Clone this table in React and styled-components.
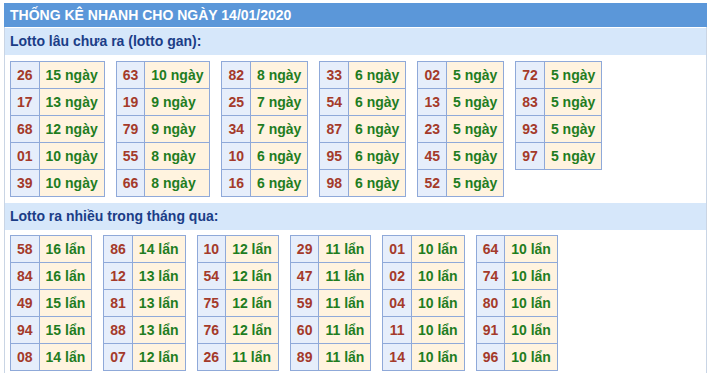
import React from "react";
import styled, { createGlobalStyle } from "styled-components";

const Global = createGlobalStyle`
  html, body { margin: 0; padding: 0; background: #fff; }
  body { font-family: "Liberation Sans", Arial, sans-serif; }
`;

const Wrapper = styled.div`
  margin: 3px 0 0 4px;
  width: 703px;
`;

const Title = styled.div`
  height: 24px;
  background: #5b97d9;
  color: #fff;
  font-weight: bold;
  font-size: 14px;
  line-height: 25px;
  padding-left: 6px;
`;

const Body = styled.div`
  border-left: 1px solid #c9d5e5;
  border-right: 1px solid #c9d5e5;
  padding-top: 1px;
  padding-bottom: 10px;
`;

const SubHeader = styled.div`
  height: 27px;
  background: #d6e7fa;
  color: #1b3d87;
  font-weight: bold;
  font-size: 14px;
  line-height: 27px;
  padding-left: 5px;
`;

const TableRow = styled.div`
  display: flex;
  align-items: flex-start;
  gap: 11px;
  padding: ${(p) => (p.$last ? "5px 5px 7px 5px" : "6px 5px 6px 5px")};
`;

const Table = styled.table`
  border-collapse: collapse;
  font-size: 14px;
  font-weight: bold;
`;

const NumCell = styled.td`
  border: 1px solid #8fa9d9;
  background: #e6eefb;
  color: #a43a2a;
  height: 26px;
  padding: 0 6px;
  text-align: center;
`;

const ValCell = styled.td`
  border: 1px solid #8fa9d9;
  background: #fff3df;
  color: #1f7d1f;
  height: 26px;
  padding: 0 6px 0 6px;
  white-space: nowrap;
`;

const gan = [
  [["26", 15], ["17", 13], ["68", 12], ["01", 10], ["39", 10]],
  [["63", 10], ["19", 9], ["79", 9], ["55", 8], ["66", 8]],
  [["82", 8], ["25", 7], ["34", 7], ["10", 6], ["16", 6]],
  [["33", 6], ["54", 6], ["87", 6], ["95", 6], ["98", 6]],
  [["02", 5], ["13", 5], ["23", 5], ["45", 5], ["52", 5]],
  [["72", 5], ["83", 5], ["93", 5], ["97", 5]],
];

const nhieu = [
  [["58", 16], ["84", 16], ["49", 15], ["94", 15], ["08", 14]],
  [["86", 14], ["12", 13], ["81", 13], ["88", 13], ["07", 12]],
  [["10", 12], ["54", 12], ["75", 12], ["76", 12], ["26", 11]],
  [["29", 11], ["47", 11], ["59", 11], ["60", 11], ["89", 11]],
  [["01", 10], ["02", 10], ["04", 10], ["11", 10], ["14", 10]],
  [["64", 10], ["74", 10], ["80", 10], ["91", 10], ["96", 10]],
];

function Group({ data, unit, last }) {
  return (
    <TableRow $last={last}>
      {data.map((col, i) => (
        <Table key={i}>
          <tbody>
            {col.map(([n, v]) => (
              <tr key={n}>
                <NumCell>{n}</NumCell>
                <ValCell>
                  {v} {unit}
                </ValCell>
              </tr>
            ))}
          </tbody>
        </Table>
      ))}
    </TableRow>
  );
}

export default function App() {
  return (
    <>
      <Global />
      <Wrapper>
        <Title>THỐNG KÊ NHANH CHO NGÀY 14/01/2020</Title>
        <Body>
          <SubHeader>Lotto lâu chưa ra (lotto gan):</SubHeader>
          <Group data={gan} unit="ngày" />
          <SubHeader>Lotto ra nhiều trong tháng qua:</SubHeader>
          <Group data={nhieu} unit="lẩn" last />
        </Body>
      </Wrapper>
    </>
  );
}
